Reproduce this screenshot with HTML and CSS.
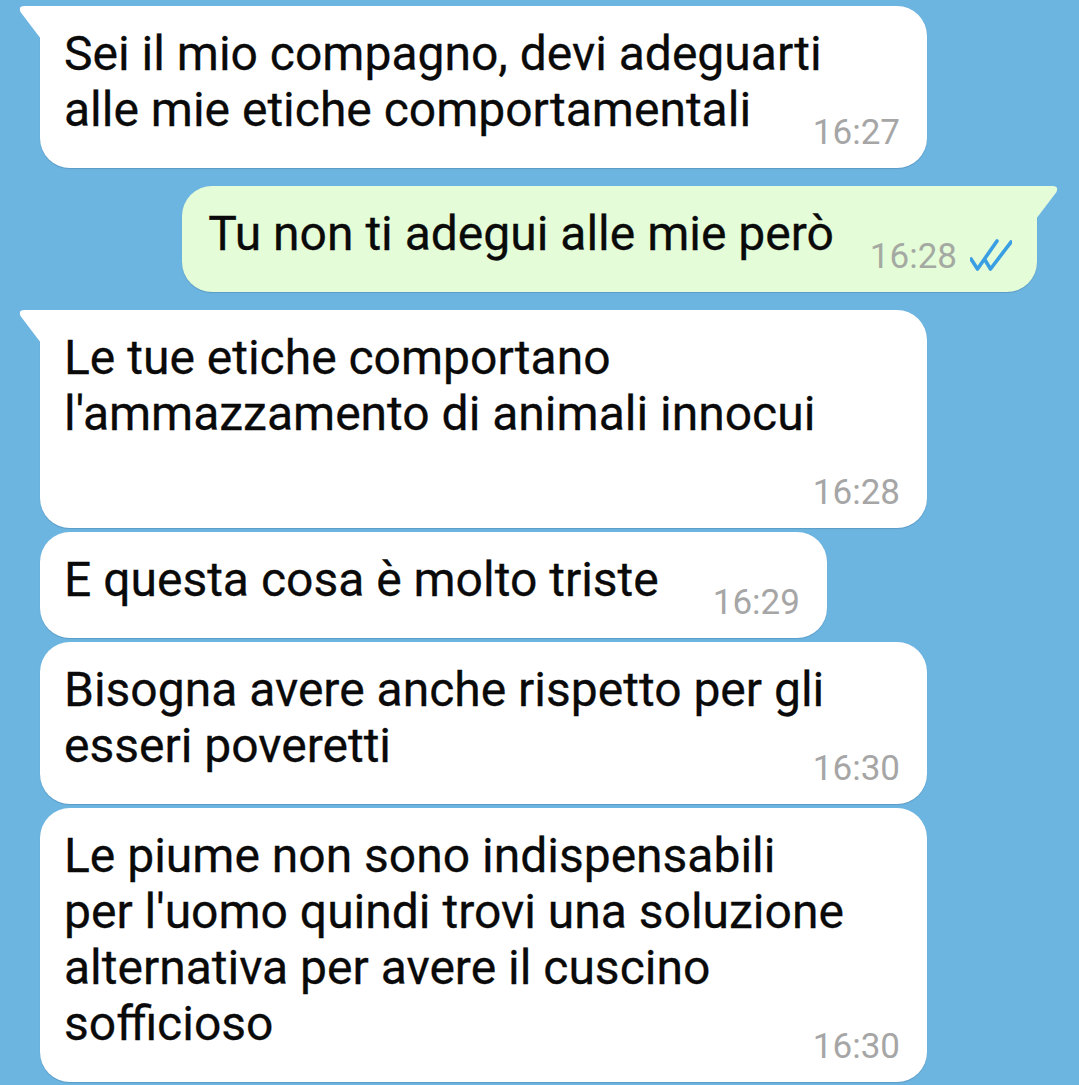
FILE: index.html
```html
<!DOCTYPE html>
<html lang="it">

<head>
    <meta charset="UTF-8">
    <meta name="viewport" content="width=device-width, initial-scale=1.0">
    <title>Chat</title>
    <link rel="stylesheet" href="styles.css">
</head>

<body>
    <div class="chat">

        <!-- incoming -->
        <div class="group">
            <div class="bubble first">Sei il mio compagno, devi adeguarti alle mie etiche comportamentali<span class="time">16:27</span></div>
        </div>

        <!-- outgoing -->
        <div class="group out">
            <div class="bubble first">Tu non ti adegui alle mie però<span class="time">16:28<svg class="ticks" viewBox="0 0 42 32" width="42" height="32"><path d="M1 20 L7.5 30 L27 2" /><path d="M15 21 L20.5 30 L41 3" /></svg></span></div>
        </div>

        <!-- incoming -->
        <div class="group">
            <div class="bubble first">Le tue etiche comportano l'ammazzamento di animali innocui<span class="time">16:28</span></div>
            <div class="bubble">E questa cosa è molto triste<span class="time">16:29</span></div>
            <div class="bubble">Bisogna avere anche rispetto per gli esseri poveretti<span class="time">16:30</span></div>
            <div class="bubble">Le piume non sono indispensabili per l'uomo quindi trovi una soluzione alternativa per avere il cuscino sofficioso<span class="time">16:30</span></div>
        </div>

    </div>
</body>

</html>
```

FILE: styles.css
```css
body {
    margin: 0;
    padding: 0;
    background-color: #6db5e1;
    font-family: Roboto, "Noto Sans", sans-serif;
    color: #0a0a0a;
    overflow: hidden;
}

.chat {
    display: flex;
    flex-direction: column;
    gap: 18px;
    padding: 6px 0;
}

/* Message groups */
.group {
    display: flex;
    flex-direction: column;
    align-items: flex-start;
    gap: 4px;
}

.group.out {
    align-items: flex-end;
}

/* Bubbles */
.bubble {
    position: relative;
    display: flow-root;
    box-sizing: border-box;
    max-width: 887px;
    margin-left: 40px;
    padding: 20px 76px 15px 24px;
    background-color: #fff;
    border-radius: 30px;
    box-shadow: 0 1px 1px rgba(0, 40, 80, 0.18);
    font-size: 48px;
    line-height: 56px;
    -webkit-text-stroke: 0.3px #0a0a0a;
}

.bubble.first {
    border-top-left-radius: 0;
}

.bubble.first::before {
    content: "";
    position: absolute;
    top: 0;
    left: -21px;
    width: 22px;
    height: 33px;
    background-color: inherit;
    clip-path: path("M5 0 L22 0 L22 33 L1.5 6 Q-1 0 5 0 Z");
}

.out .bubble {
    margin-left: 0;
    margin-right: 42px;
    padding-left: 26px;
    background-color: #e4fcd8;
}

.out .bubble.first {
    border-top-left-radius: 30px;
    border-top-right-radius: 0;
}

.out .bubble.first::before {
    left: auto;
    right: -21px;
    clip-path: path("M17 0 L0 0 L0 33 L20.5 6 Q23 0 17 0 Z");
}

/* Time stamp */
.time {
    float: right;
    margin: 30px -49px 0 54px;
    font-size: 35px;
    line-height: 41px;
    color: #a6a6a6;
    -webkit-text-stroke: 0;
}

.out .time {
    margin-left: 36px;
    margin-right: -51px;
    color: #a4aaa2;
}

.ticks {
    margin-left: 13px;
    vertical-align: -3px;
    fill: none;
    stroke: #3a9ee2;
    stroke-width: 3.6;
    stroke-linecap: round;
    stroke-linejoin: round;
}
```
